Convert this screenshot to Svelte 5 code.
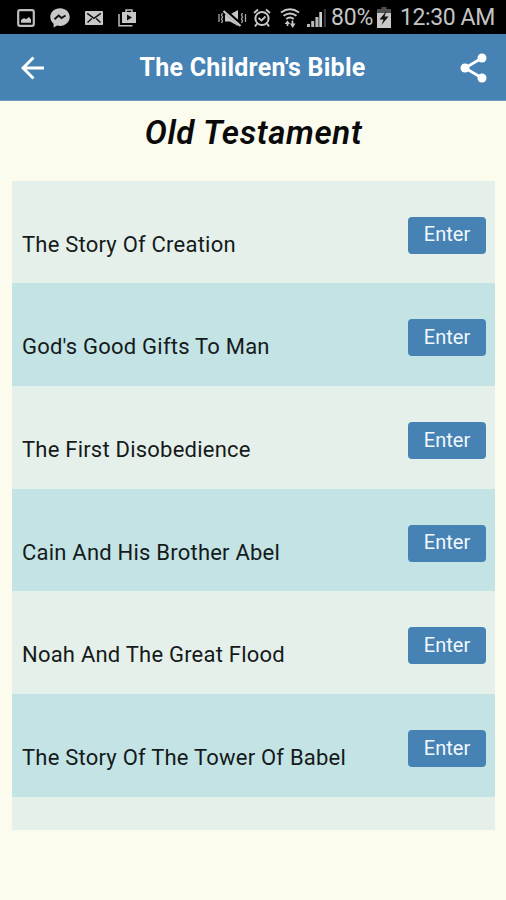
<script>
	const stories = [
		"The Story Of Creation",
		"God's Good Gifts To Man",
		"The First Disobedience",
		"Cain And His Brother Abel",
		"Noah And The Great Flood",
		"The Story Of The Tower Of Babel",
		"",
	];
</script>

<div class="screen">
	<div class="status">
		<div class="notifications">
			<svg width="18" height="18" viewBox="0 0 18 18">
				<rect x="1.2" y="1.2" width="15.6" height="15.6" rx="1.8" fill="none" stroke="#bdbdbd" stroke-width="2.2" />
				<path d="M4 13.7V11l3-2 2 1.3L12 8l2 2.4v3.3z" fill="#c8c8c8" />
			</svg>
			<svg width="20" height="20" viewBox="0 0 20 20">
				<path d="M10 0.3c5.600 0 9.700 3.800 9.700 8.800s-4.100 8.800-9.700 8.800l-2.800-.4-3.600 2v-3.700C1.500 14.200.3 11.900.3 9.100.3 4.100 4.400.3 10 .3z" fill="#c8c8c8" />
				<path d="M4.500 11.300l4.200-3.700 2.800 2.400 4-2.500" fill="none" stroke="#111" stroke-width="2" />
			</svg>
			<svg width="18" height="14" viewBox="0 0 18 14">
				<rect width="18" height="14" rx="0.8" fill="#c8c8c8" />
				<path d="M2.200 2.300l6.800 5 6.800-5M2.500 11.500l4.300-4M15.500 11.500l-4.300-4" fill="none" stroke="#111" stroke-width="1.500" />
			</svg>
			<svg width="18" height="18" viewBox="0 0 18 18">
				<path d="M1 5v11.800h13.500" fill="none" stroke="#bdbdbd" stroke-width="1.500" />
				<path d="M4 3h14v11H4z" fill="#c8c8c8" />
				<path d="M8 3V1h6v2" fill="none" stroke="#bdbdbd" stroke-width="1.500" />
				<path d="M9 5.500l5 3-5 3z" fill="#111" />
			</svg>
		</div>

		<div class="system">
			<svg class="mute" width="29" height="20" viewBox="0 0 29 20">
				<path d="M7 6.500h5L20 2v16l-8-4.500H7z" fill="#c8c8c8" />
				<path d="M6 2L23 17" stroke="#000" stroke-width="4.200" />
				<path d="M5.500 3L22.500 18" stroke="#c8c8c8" stroke-width="2.200" />
				<path d="M4.500 5l-1 2 1 2-1 2 1 2-1 2M1 6v8M24.500 5l-1 2 1 2-1 2 1 2-1 2M27.500 6v8" fill="none" stroke="#a8a8a8" stroke-width="1.300" />
			</svg>
			<svg class="alarm" width="18" height="20" viewBox="0 0 18 20">
				<circle cx="9" cy="10.500" r="6.600" fill="none" stroke="#c8c8c8" stroke-width="2" />
				<path d="M5.500 10l3 2.500 4-4M1 5l4-3.500M17 5l-4-3.500M4 15.500L2 18.500M14 15.500l2 3" fill="none" stroke="#c8c8c8" stroke-width="1.900" />
			</svg>
			<svg class="wifi" width="20" height="20" viewBox="0 0 20 20">
				<path d="M1 4.500q9-6.500 18 0M3.500 7.800q6.500-4.800 13 0M6.300 11q3.700-3 7.400 0" fill="none" stroke="#c8c8c8" stroke-width="2" />
				<path d="M7.500 18v-4M12.500 12.500v5" stroke="#c8c8c8" stroke-width="1.700" />
				<path d="M4.500 16l3-3.500 2.500 3.500zM10 15.500h5.500L12.700 20z" fill="#c8c8c8" />
			</svg>
			<svg class="signal" width="20" height="18" viewBox="0 0 20 18">
				<path d="M0 15h3v3H0zM4.200 12h3v6h-3zM8.400 8h3.100v10H8.400z" fill="#b8b8b8" />
				<path d="M12.300 3h2.700v15h-2.700z" fill="#d0d0d0" />
				<path d="M16.800 0H19v18h-2.200z" fill="#393939" />
			</svg>
			<span class="percent">80%</span>
			<svg class="battery" width="14" height="21" viewBox="0 0 14 21">
				<path d="M4.500 0h5v2H14v4H0V2h4.500z" fill="#505050" />
				<path d="M0 6h14v15H0z" fill="#c8c8c8" />
				<path d="M9.500 4L2.500 12.500h4L4.500 18l7-8.500h-4z" fill="#111" />
			</svg>
			<span class="clock">12:30 AM</span>
		</div>
	</div>

	<header>
		<button class="icon-button" aria-label="Back">
			<svg width="24" height="24" viewBox="0 0 24 24">
				<path d="M12.500 1.500L2 12l10.500 10.500M2 12h21" fill="none" stroke="#fff" stroke-width="2.900" />
			</svg>
		</button>
		<h1>The Children's Bible</h1>
		<button class="icon-button" aria-label="Share">
			<svg width="28" height="30" viewBox="0 0 28 30">
				<path d="M22 5L5 15l17 10" fill="none" stroke="#fff" stroke-width="2.800" />
				<circle cx="22" cy="5" r="4.500" fill="#fff" />
				<circle cx="5" cy="15" r="4.500" fill="#fff" />
				<circle cx="22" cy="25" r="4.500" fill="#fff" />
			</svg>
		</button>
	</header>

	<h2>Old Testament</h2>

	<div class="list">
		{#each stories as story}
			<div class="row">
				{#if story}
					<span class="name">{story}</span>
					<button class="enter">Enter</button>
				{/if}
			</div>
		{/each}
	</div>
</div>

<style>
	:global(body) {
		background: #fbfbee;
	}

	.screen {
		height: 900px;
		overflow: hidden;
		background: #fbfbee;
		font-family: Roboto, "Liberation Sans", sans-serif;
	}

	svg {
		display: block;
		flex: none;
	}

	button {
		border: none;
		padding: 0;
		font-family: inherit;
		cursor: pointer;
	}

	.status {
		display: flex;
		justify-content: space-between;
		height: 34px;
		padding: 0 12px 0 17px;
		box-sizing: border-box;
		background: #000;
		color: #c4c4c4;
	}

	.notifications,
	.system {
		display: flex;
		align-items: center;
		height: 35px;
	}

	.notifications {
		gap: 15px;
	}

	.mute {
		margin-right: 6px;
	}

	.alarm {
		margin-right: 9px;
	}

	.wifi {
		margin-right: 7px;
	}

	.signal {
		margin-right: 4px;
	}

	.percent,
	.clock {
		font-size: 23px;
		line-height: 38px;
		white-space: nowrap;
	}

	.percent {
		width: 46px;
		letter-spacing: -0.2px;
	}

	.battery {
		margin-right: 9px;
	}

	.clock {
		width: 94px;
		letter-spacing: -0.4px;
	}

	header {
		display: flex;
		align-items: center;
		justify-content: space-between;
		height: 67px;
		padding: 2px 18px 0 21px;
		box-sizing: border-box;
		background: #4682b4;
		border-bottom: 1px solid #6f9fc0;
	}

	.icon-button {
		background: none;
	}

	h1 {
		margin: 0;
		color: #fff;
		font-size: 25px;
		font-weight: 700;
		line-height: 30px;
		letter-spacing: 0.25px;
		white-space: nowrap;
	}

	h2 {
		margin: 0;
		height: 79.7px;
		padding: 12px 0 0 1px;
		box-sizing: border-box;
		color: #0a0a0a;
		font-size: 33px;
		font-style: italic;
		font-weight: 600;
		line-height: 40px;
		letter-spacing: 0.65px;
		text-align: center;
	}

	.list {
		height: 649px;
		margin: 0 11px 0 12px;
		overflow: hidden;
	}

	.row {
		display: flex;
		justify-content: space-between;
		height: 102.7px;
		padding: 36px 9px 0 10px;
		box-sizing: border-box;
		background: #e6f0ea;
	}

	.row:nth-child(even) {
		background: #c3e3e5;
	}

	.name {
		margin-top: 14px;
		color: #151a1a;
		font-size: 22px;
		line-height: 28px;
		letter-spacing: 0.22px;
		white-space: nowrap;
	}

	.enter {
		width: 78px;
		height: 37px;
		padding-bottom: 2px;
		border-radius: 4px;
		background: #4682b4;
		color: #f2f8fc;
		font-size: 20px;
	}
</style>
